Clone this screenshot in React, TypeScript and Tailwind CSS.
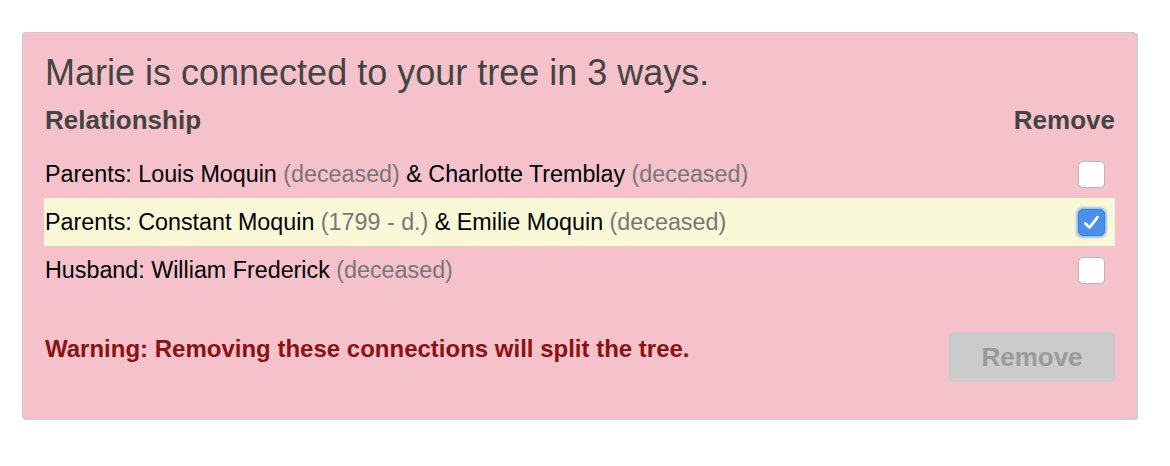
import React from "react";

const font = { fontFamily: '"Liberation Sans", Arial, Helvetica, sans-serif' };

function Checkbox({ checked }: { checked?: boolean }) {
  if (checked) {
    return (
      <div className="w-[27px] h-[27px] rounded-[5px] bg-[#4a8fea] border border-[#3b7fdc] shadow-[0_0_2px_2px_rgba(120,170,240,0.7)] flex items-center justify-center">
        <svg width="23" height="23" viewBox="0 0 22 22" fill="none">
          <path d="M5.2 11.9 L9.1 15.9 L16.8 5.8" stroke="white" strokeWidth="2.6" strokeLinecap="round" strokeLinejoin="round" />
        </svg>
      </div>
    );
  }
  return <div className="w-[27px] h-[27px] rounded-[5px] bg-white border border-[#b9b9b9]" />;
}

function Row({ children, checked, highlight }: { children: React.ReactNode; checked?: boolean; highlight?: boolean }) {
  return (
    <div className={`h-[48px] flex items-center justify-between pl-[1px] pr-[10px] ${highlight ? "bg-[#f9f9d7]" : ""}`}>
      <div className="text-[23.3px] leading-[28px] text-black">{children}</div>
      <Checkbox checked={checked} />
    </div>
  );
}

const G = ({ children }: { children: React.ReactNode }) => <span className="text-[#777]">{children}</span>;

export default function App() {
  return (
    <div className="w-[1170px] h-[466px] bg-white pt-[32px] pl-[22px]" style={font}>
      <div className="w-[1115px] h-[387px] bg-[#f5c1cb] border border-[#cdcdcd] rounded-[3px] shadow-[1px_1px_0_#cfcfcf] px-[21px] pt-[20px]">
        <h1 className="text-[36px] leading-[40px] text-[#444] font-normal pl-[1px]">Marie is connected to your tree in 3 ways.</h1>
        <div className="mt-[12px] flex justify-between text-[26px] leading-[30px] font-bold text-[#444] pl-[1px]">
          <span>Relationship</span>
          <span>Remove</span>
        </div>
        <div className="mt-[15px]">
          <Row>
            Parents: Louis Moquin <G>(deceased)</G> &amp; Charlotte Tremblay <G>(deceased)</G>
          </Row>
          <Row checked highlight>
            Parents: Constant Moquin <G>(1799 - d.)</G> &amp; Emilie Moquin <G>(deceased)</G>
          </Row>
          <Row>
            Husband: William Frederick <G>(deceased)</G>
          </Row>
        </div>
        <div className="mt-[38px] flex justify-between items-start">
          <div className="mt-[3px] pl-[1px] text-[24px] leading-[28px] font-bold text-[#8a1212]">
            Warning: Removing these connections will split the tree.
          </div>
          <button className="w-[166px] h-[50px] rounded-[4px] bg-[#cbcbcb] text-[#9a9a9a] text-[26px] font-bold" style={font}>
            Remove
          </button>
        </div>
      </div>
    </div>
  );
}
